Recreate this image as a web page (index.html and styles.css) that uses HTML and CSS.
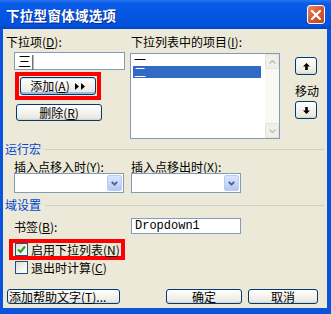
FILE: index.html
```html
<!DOCTYPE html>
<html>
<head>
<meta charset="utf-8">
<link rel="stylesheet" href="styles.css">
</head>
<body>
<div class="window">
  <div class="titlebar">
    <span class="title">下拉型窗体域选项</span>
    <span class="close"><svg width="10" height="10" viewBox="0 0 10 10"><path d="M1 1 L9 9 M9 1 L1 9" stroke="#fff" stroke-width="2.2" stroke-linecap="square"/></svg></span>
  </div>
  <div class="frame">
    <div class="content">
      <div class="top">
        <div class="colL">
          <div class="lbl">下拉项(<u>D</u>):</div>
          <div class="field">三|</div>
          <div class="hl hl-add">
            <div class="btn btn-add">添加(<u>A</u>)<svg class="dbl" width="11" height="7" viewBox="0 0 11 7"><path d="M0 0 L4 3.5 L0 7Z M6 0 L10 3.5 L6 7Z" fill="#000"/></svg></div>
          </div>
          <div class="btn btn-del">删除(<u>R</u>)</div>
        </div>
        <div class="colM">
          <div class="lbl">下拉列表中的项目(<u>I</u>):</div>
          <div class="listbox">
            <div class="items">
              <div class="item">一</div>
              <div class="item sel">二</div>
            </div>
            <div class="vscroll">
              <div class="sbtn"><svg width="7" height="4" viewBox="0 0 7 4"><path d="M0.5 3.5 L3.5 0.5 L6.5 3.5" stroke="#c3c1b3" stroke-width="1.5" fill="none"/></svg></div>
              <div class="strack"></div>
              <div class="sbtn"><svg width="7" height="4" viewBox="0 0 7 4"><path d="M0.5 0.5 L3.5 3.5 L6.5 0.5" stroke="#c3c1b3" stroke-width="1.5" fill="none"/></svg></div>
            </div>
          </div>
        </div>
        <div class="colR">
          <div class="btn btn-move"><svg width="7" height="7" viewBox="0 0 7 7"><path d="M3.5 0 L7 3.5 H4.8 V7 H2.2 V3.5 H0 Z" fill="#000"/></svg></div>
          <div class="lbl move-lbl">移动</div>
          <div class="btn btn-move down"><svg width="7" height="7" viewBox="0 0 7 7"><path d="M3.5 7 L7 3.5 H4.8 V0 H2.2 V3.5 H0 Z" fill="#000"/></svg></div>
        </div>
      </div>

      <div class="gh gh1"><span>运行宏</span><span class="rule"></span></div>
      <div class="lblrow">
        <div class="lbl c1">插入点移入时(<u>Y</u>):</div>
        <div class="lbl">插入点移出时(<u>X</u>):</div>
      </div>
      <div class="comborow">
        <div class="combo c1"><span class="dd"><svg width="7" height="5" viewBox="0 0 7 5"><path d="M0.8 0.8 L3.5 3.6 L6.2 0.8" stroke="#4d6185" stroke-width="1.8" fill="none"/></svg></span></div>
        <div class="combo c2"><span class="dd"><svg width="7" height="5" viewBox="0 0 7 5"><path d="M0.8 0.8 L3.5 3.6 L6.2 0.8" stroke="#4d6185" stroke-width="1.8" fill="none"/></svg></span></div>
      </div>

      <div class="gh gh2"><span>域设置</span><span class="rule"></span></div>
      <div class="bmrow">
        <div class="lbl c1">书签(<u>B</u>):</div>
        <div class="field mono">Dropdown1</div>
      </div>
      <div class="hl hl-check">
        <span class="cb"><svg width="9" height="9" viewBox="0 0 9 9"><path d="M1 4.5 L3.5 7 L8 1.5" stroke="#21a121" stroke-width="2" fill="none"/></svg></span>
        <span class="lbl">启用下拉列表(<u>N</u>)</span>
      </div>
      <div class="check2">
        <span class="cb"></span>
        <span class="lbl">退出时计算(<u>C</u>)</span>
      </div>

      <div class="btnrow">
        <div class="btn btn-help">添加帮助文字(<u>T</u>)...</div>
        <div class="btn btn-ok">确定</div>
        <div class="btn btn-cancel">取消</div>
      </div>
    </div>
  </div>
</div>
</body>
</html>
```

FILE: styles.css
```css
html, body {
  margin: 0;
  padding: 0;
  background: #fff;
}
.window {
  width: 331px;
  height: 314px;
  font-family: "Noto Sans CJK SC", "DejaVu Sans", sans-serif;
  font-size: 12px;
  color: #000;
  background: #0a54dc;
}
.titlebar {
  height: 29px;
  display: flex;
  align-items: center;
  padding-left: 6px;
  box-sizing: border-box;
  background: linear-gradient(#2a74f0 0%, #0a5ce8 12%, #0556e2 50%, #0452dc 85%, #0045c8 100%);
}
.title {
  color: #fff;
  font-weight: bold;
  font-size: 13.5px;
  letter-spacing: 0.3px;
  text-shadow: 1px 1px 0 #0a2a8e;
  line-height: 16px;
  flex: 1;
}
.close {
  width: 18px;
  height: 19px;
  margin-right: 6px;
  box-sizing: border-box;
  border: 1px solid #fff;
  border-radius: 3px;
  background: linear-gradient(135deg, #eb8a68 0%, #d9582f 50%, #c44318 100%);
  display: flex;
  align-items: center;
  justify-content: center;
}
.frame {
  padding: 0 4px 6px 3px;
}
.content {
  width: 324px;
  height: 279px;
  background: #ece9d8;
  padding-top: 6px;
  box-sizing: border-box;
  display: flex;
  flex-direction: column;
  align-items: flex-start;
}
.lbl {
  line-height: 13px;
  height: 13px;
  white-space: nowrap;
}
u { text-decoration: underline; text-underline-offset: 1px; }

.top {
  display: flex;
  height: 104px;
}
.colL {
  width: 119px;
  margin-left: 3px;
  display: flex;
  flex-direction: column;
  align-items: flex-start;
}
.field {
  box-sizing: border-box;
  background: #fff;
  border: 1px solid #7f9db9;
  line-height: 15px;
  padding-left: 3px;
}
.colL .field {
  margin: 4px 0 0 8px;
  width: 111px;
  height: 18px;
  font-size: 13px;
}
.hl {
  border: 4px solid #ff0000;
  box-sizing: border-box;
}
.hl-add {
  margin: 2px 0 0 9px;
  padding: 1px;
}
.btn {
  box-sizing: border-box;
  border: 1px solid #003c74;
  border-radius: 3px;
  background: linear-gradient(#ffffff 0%, #f6f5f1 40%, #ebe9e0 85%, #d7d2c5 100%);
  display: flex;
  align-items: center;
  justify-content: center;
  white-space: nowrap;
  line-height: 12px;
}
.btn-add {
  width: 76px;
  height: 18px;
  box-shadow: inset 0 -2px 0 #98b8ee, inset 0 1px 0 #cee0fb;
}
.dbl { margin-left: 5px; }
.btn-del {
  margin: 4px 0 0 10px;
  width: 86px;
  height: 17px;
}
.colM {
  width: 149px;
  margin-left: 6px;
  display: flex;
  flex-direction: column;
  align-items: flex-start;
}
.listbox {
  margin: 5px 0 0 -1px;
  width: 150px;
  height: 86px;
  box-sizing: border-box;
  border: 1px solid #7f9db9;
  background: #fff;
  display: flex;
}
.items {
  flex: 1;
  padding: 0 4px 0 2px;
}
.item {
  height: 12px;
  line-height: 12px;
  padding-left: 1px;
}
.item.sel {
  background: #316ac5;
  color: #fff;
}
.vscroll {
  width: 14px;
  display: flex;
  flex-direction: column;
  background: #f8f8f5;
}
.sbtn {
  height: 15px;
  box-sizing: border-box;
  border: 1px solid #e4e2da;
  border-radius: 2px;
  background: #f1f0ea;
  display: flex;
  align-items: center;
  justify-content: center;
}
.strack { flex: 1; }
.colR {
  width: 24px;
  margin-left: 15px;
  display: flex;
  flex-direction: column;
  align-items: flex-start;
}
.btn-move {
  width: 22px;
  height: 18px;
  margin-top: 22px;
}
.move-lbl {
  margin-top: 9px;
}
.btn-move.down { margin-top: 4px; }

.gh {
  display: flex;
  align-items: center;
  width: 319px;
  margin-left: 2px;
  color: #0046d5;
  height: 12px;
  line-height: 12px;
}
.gh .rule {
  flex: 1;
  margin-left: 4px;
  border-top: 1px solid #d0d0bf;
}
.gh1 { margin-top: 4px; }
.gh2 { margin-top: 6px; }
.lblrow {
  display: flex;
  margin-top: 5px;
}
.c1 {
  margin-left: 11px;
  width: 117px;
}
.comborow {
  display: flex;
}
.combo {
  width: 110px;
  height: 20px;
  box-sizing: border-box;
  border: 1px solid #7f9db9;
  background: #fff;
  display: flex;
  justify-content: flex-end;
  align-items: stretch;
  padding: 1px;
}
.combo.c1 { width: 110px; }
.combo.c2 { margin-left: 7px; }
.dd {
  width: 15px;
  border: 1px solid #b8cbf4;
  border-radius: 2px;
  box-sizing: border-box;
  background: linear-gradient(#dbe6fd, #c4d4fb 60%, #b3c7f7);
  display: flex;
  align-items: center;
  justify-content: center;
}
.bmrow {
  display: flex;
  align-items: center;
  margin-top: 7px;
  height: 16px;
}
.bmrow .field {
  width: 110px;
  height: 16px;
  line-height: 14px;
}
.mono {
  font-family: "Liberation Mono", "DejaVu Sans Mono", monospace;
  font-size: 12px;
}
.hl-check {
  margin: 5px 0 0 6px;
  width: 116px;
  height: 21px;
  display: flex;
  align-items: center;
  padding-left: 2px;
}
.cb {
  width: 13px;
  height: 13px;
  box-sizing: border-box;
  border: 1px solid #1c5180;
  background: linear-gradient(135deg, #dcdcd5 0%, #f6f6f3 60%, #fff 100%);
  display: inline-flex;
  align-items: center;
  justify-content: center;
  margin-right: 3px;
  flex: none;
}
.check2 {
  display: flex;
  align-items: center;
  margin: 1px 0 0 12px;
  height: 13px;
}
.btnrow {
  display: flex;
  margin-top: 15px;
}
.btnrow .btn { height: 15px; }
.btn-help {
  margin-left: 4px;
  width: 113px;
  justify-content: flex-start;
  padding-left: 1px;
}
.btn-ok {
  margin-left: 46px;
  width: 76px;
}
.btn-cancel {
  margin-left: 6px;
  width: 70px;
}
```
